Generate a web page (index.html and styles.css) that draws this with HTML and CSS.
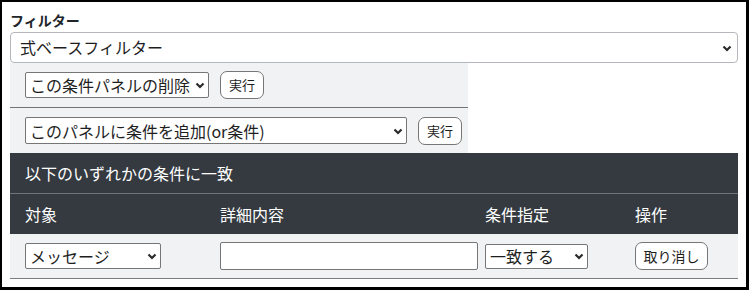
FILE: index.html
```html
<!DOCTYPE html>
<html lang="ja">
<head>
<meta charset="utf-8">
<title>フィルター</title>
<link rel="stylesheet" href="styles.css">
</head>
<body>
<div class="frame">
  <div class="flabel">フィルター</div>
  <div class="selwrap big">
    <select class="sel sel-big"><option>式ベースフィルター</option></select>
    <svg class="chev" width="10" height="7" viewBox="0 0 10 7"><path d="M1.5 1.5 L5 5 L8.5 1.5" fill="none" stroke="#2a2a2a" stroke-width="2.2"/></svg>
  </div>
  <div class="panel">
    <div class="prow">
      <div class="selwrap">
        <select class="sel sel-del"><option>この条件パネルの削除</option></select>
        <svg class="chev" width="10" height="7" viewBox="0 0 10 7"><path d="M1.5 1.5 L5 5 L8.5 1.5" fill="none" stroke="#2a2a2a" stroke-width="2.2"/></svg>
      </div>
      <button class="btn">実行</button>
    </div>
    <div class="prow last">
      <div class="selwrap">
        <select class="sel sel-add"><option>このパネルに条件を追加(or条件)</option></select>
        <svg class="chev" width="10" height="7" viewBox="0 0 10 7"><path d="M1.5 1.5 L5 5 L8.5 1.5" fill="none" stroke="#2a2a2a" stroke-width="2.2"/></svg>
      </div>
      <button class="btn">実行</button>
    </div>
  </div>
  <table class="cond">
    <colgroup><col class="c1"><col class="c2"><col class="c3"><col class="c4"></colgroup>
    <thead>
      <tr class="title"><th colspan="4">以下のいずれかの条件に一致</th></tr>
      <tr class="heads"><th>対象</th><th>詳細内容</th><th class="col3">条件指定</th><th>操作</th></tr>
    </thead>
    <tbody>
      <tr class="data">
        <td>
          <div class="selwrap">
            <select class="sel sel-target"><option>メッセージ</option></select>
            <svg class="chev" width="10" height="7" viewBox="0 0 10 7"><path d="M1.5 1.5 L5 5 L8.5 1.5" fill="none" stroke="#2a2a2a" stroke-width="2.2"/></svg>
          </div>
        </td>
        <td><input class="txt" type="text"></td>
        <td class="col3">
          <div class="selwrap">
            <select class="sel sel-cond"><option>一致する</option></select>
            <svg class="chev" width="10" height="7" viewBox="0 0 10 7"><path d="M1.5 1.5 L5 5 L8.5 1.5" fill="none" stroke="#2a2a2a" stroke-width="2.2"/></svg>
          </div>
        </td>
        <td><button class="btn btn-cancel">取り消し</button></td>
      </tr>
    </tbody>
  </table>
</div>
</body>
</html>
```
FILE: styles.css
```css
html, body {
  margin: 0;
  padding: 0;
  background: #fff;
}
body {
  font-family: "Noto Sans CJK JP", "Noto Sans", sans-serif;
  color: #212529;
}
.frame {
  box-sizing: border-box;
  width: 749px;
  height: 290px;
  border-style: solid;
  border-color: #000;
  border-width: 2px 3px 3px 2px;
  padding: 8px 8px 0 8px;
  overflow: hidden;
}
.flabel {
  font-size: 14px;
  font-weight: bold;
  line-height: 20px;
  height: 20px;
  margin-bottom: 2px;
  color: #212529;
}
.selwrap {
  position: relative;
  display: inline-block;
}
.selwrap .chev {
  position: absolute;
  right: 4px;
  top: 50%;
  margin-top: -3px;
  pointer-events: none;
}
.sel {
  -webkit-appearance: none;
  appearance: none;
  box-sizing: border-box;
  font-family: inherit;
  font-size: 16px;
  color: #1e1e1e;
  background: #fff;
  border: 1px solid #767676;
  border-radius: 2px;
  padding: 0 18px 0 4px;
  margin: 0;
  display: block;
  line-height: 22px;
}
.big {
  display: block;
}
.big .chev {
  right: 6px;
}
.sel-big {
  width: 728px;
  height: 31px;
  border: 1px solid #b3b6ba;
  border-radius: 4px;
  padding-left: 9px;
  line-height: 29px;
}
.panel {
  width: 458px;
  background: #f1f2f4;
}
.prow {
  height: 44px;
  border-bottom: 1px solid #747474;
  display: flex;
  align-items: center;
  padding-left: 15px;
  gap: 11px;
}
.prow.last {
  height: 45px;
  border-bottom: 0;
}
.sel-del {
  width: 184px;
  height: 26px;
}
.sel-add {
  width: 382px;
  height: 27px;
}
.btn {
  box-sizing: border-box;
  font-family: inherit;
  font-size: 13px;
  color: #1e1e1e;
  background: #fff;
  border: 1px solid #767676;
  border-radius: 7px;
  height: 28px;
  padding: 0 8px;
  margin: 0;
  line-height: 26px;
}
.cond {
  width: 728px;
  border-collapse: collapse;
  table-layout: fixed;
}
.c1 { width: 195px; }
.c2 { width: 273px; }
.c3 { width: 142px; }
.c4 { width: 118px; }
.cond th {
  background: #343a40;
  color: #fff;
  font-weight: normal;
  font-size: 16px;
  text-align: left;
  padding: 0 0 0 15px;
  line-height: 22px;
}
.title th {
  height: 40px;
  border-bottom: 1px solid #70757a;
}
.heads th {
  height: 40px;
}
.data td {
  background: #f1f2f4;
  height: 44px;
  padding: 0 0 0 15px;
  border-bottom: 1px solid #7d7d7d;
  vertical-align: middle;
}
.cond .col3 {
  padding-left: 7px;
}
.sel-target {
  width: 136px;
  height: 26px;
}
.sel-cond {
  width: 103px;
  height: 25px;
}
.txt {
  box-sizing: border-box;
  display: block;
  width: 258px;
  height: 28px;
  border: 1px solid #767676;
  border-radius: 2px;
  background: #fff;
  margin: 0;
  padding: 0 4px;
  font-family: inherit;
  font-size: 16px;
}
.btn-cancel {
  font-size: 14px;
  width: 73px;
  padding: 0;
}
```
